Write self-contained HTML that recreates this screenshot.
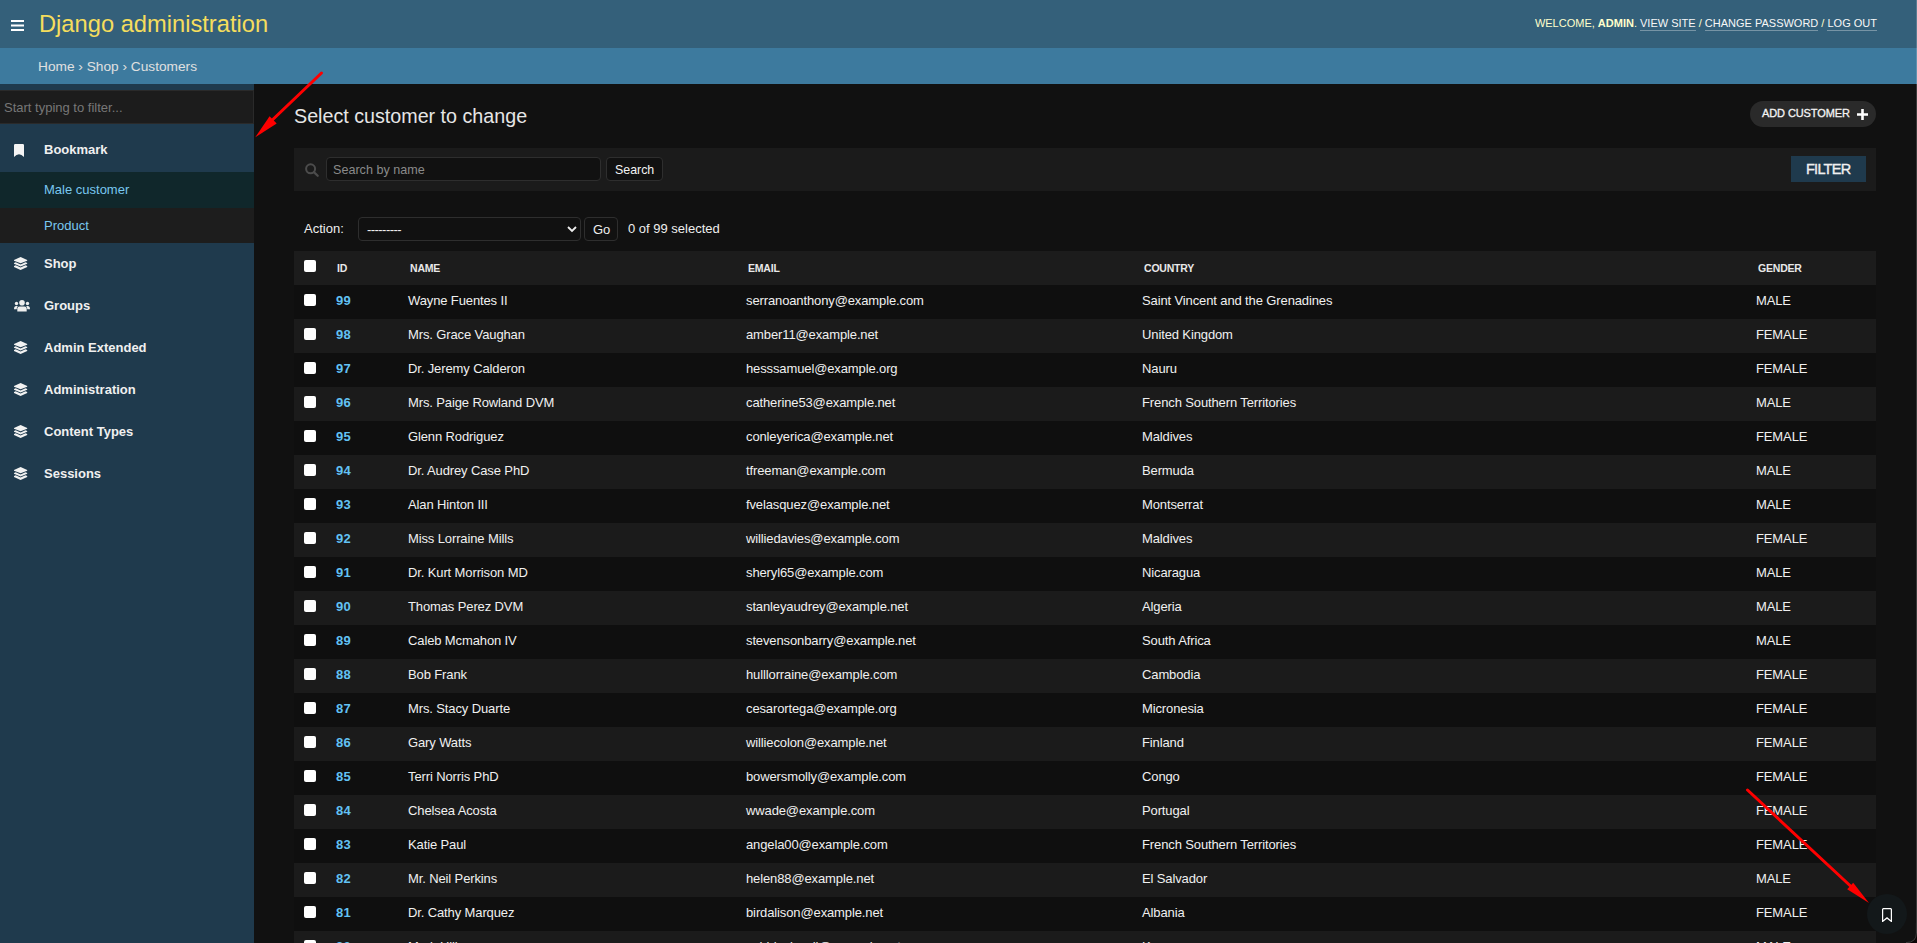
<!DOCTYPE html>
<html><head><meta charset="utf-8">
<style>
*{box-sizing:border-box;margin:0;padding:0}
html,body{width:1917px;height:943px;overflow:hidden;background:#121212;font-family:"Liberation Sans",sans-serif;color:#eee}
.abs{position:absolute}
#header{left:0;top:0;width:1917px;height:48px;background:#34607a}
#brand{left:39px;top:11px;font-size:23.7px;color:#f5dd5d;white-space:nowrap}
#burger{left:11px;top:20px;width:13px;height:11px}
#usertools{right:40px;top:17px;font-size:11px;color:#ffc;white-space:nowrap}
#usertools a{color:#f7f7f7;text-decoration:none;border-bottom:1px solid rgba(247,247,247,0.35);padding-bottom:1px}
#crumbs{left:0;top:48px;width:1917px;height:36px;background:#3d7a9e}
#crumbtxt{left:38px;top:58.5px;font-size:13.7px;color:#e0e0e0;white-space:nowrap}
#sidebar{left:0;top:84px;width:254px;height:859px;background:#1f3a4d}
#filterbox{left:-1px;top:90px;width:255px;height:34px;background:#1c1c1c;border:1px solid #2a2a2a;font-size:13px;color:#777;padding:9px 4px;white-space:nowrap}
.nav{position:absolute;left:0;width:254px;height:42px;font-size:13px;font-weight:bold;color:#f0f0f0}
.nav span{position:absolute;left:44px;top:13px}
.nav .ic{position:absolute;left:14px;top:14px}
.sub{position:absolute;left:0;width:254px;font-size:13px;color:#79c8f0}
.sub span{position:absolute;left:44px;top:10px}
#content{left:254px;top:84px;width:1663px;height:859px;background:#111}
#title{left:294px;top:105px;font-size:19.7px;color:#e6e6e6;white-space:nowrap}
#addbtn{left:1750px;top:101px;width:126px;height:26px;border-radius:13px;background:#2a2a2a;color:#f4f4f4;font-size:11px;font-weight:normal;-webkit-text-stroke:0.3px #f4f4f4;letter-spacing:-0.1px;padding:6px 0 0 12px;white-space:nowrap}
#toolbar{left:294px;top:148px;width:1582px;height:43px;background:#1b1b1b}
#search{left:326px;top:157px;width:275px;height:24px;border:1px solid #2e2e2e;border-radius:4px;background:#111;color:#8a8a8a;font-size:12.6px;padding:5px 0 0 6px}
#searchbtn{left:606px;top:157px;width:57px;height:24px;border:1px solid #2e2e2e;border-radius:4px;background:#111;color:#f4f4f4;font-size:12.4px;padding:5px 0 0 8px}
#filterbtn{left:1791px;top:156px;width:75px;height:26px;background:#1f3a4d;color:#f0f0f0;font-size:14.5px;font-weight:normal;-webkit-text-stroke:0.35px #f0f0f0;letter-spacing:-0.75px;padding:5px 0 0 15px}
#actlbl{left:304px;top:221px;font-size:13px;color:#eee}
#actsel{left:358px;top:217px;width:223px;height:24px;border:1px solid #2e2e2e;border-radius:4px;background:#111;font-size:13px;padding:4px 0 0 8px;color:#eee;letter-spacing:-0.55px}
#gobtn{left:584px;top:217px;width:34px;height:24px;border:1px solid #2e2e2e;border-radius:4px;background:#111;font-size:13px;padding:4px 0 0 8px;color:#eee}
#counter{left:628px;top:221px;font-size:13px;color:#eee;white-space:nowrap}
table{position:absolute;left:294px;top:251px;width:1582px;border-collapse:collapse;table-layout:fixed}
th{height:33.5px;background:#1c1c1c;text-align:left;font-size:10.5px;font-weight:bold;letter-spacing:-0.2px;color:#e8e8e8;padding:1px 0 0 10px;white-space:nowrap}
td{height:34px;font-size:13px;color:#f0f0f0;padding:0 0 2px 8px;letter-spacing:-0.12px;white-space:nowrap;overflow:hidden}
tr.r1 td{background:#0f0f0f}
tr.r2 td{background:#1b1b1b}
td.id{color:#62c2f4;font-weight:bold;padding-left:9px;letter-spacing:0.3px}
.chk{display:block;width:12px;height:12px;background:#fff;border-radius:2px;margin:-2px 0 0 2px}
th .chk{margin:-4px 0 0 0}
#fab{left:1867px;top:894px;width:40px;height:40px;border-radius:20px;background:#13181a}
#edge{left:1916px;top:0;width:1px;height:943px;background:rgba(255,255,255,0.18)}
</style></head><body>
<div id="header" class="abs"></div>
<svg id="burger" class="abs" viewBox="0 0 13 11"><rect x="0" y="0" width="13" height="2" fill="#fff"/><rect x="0" y="4.5" width="13" height="2" fill="#fff"/><rect x="0" y="9" width="13" height="2" fill="#fff"/></svg>
<div id="brand" class="abs">Django administration</div>
<div id="usertools" class="abs">WELCOME, <b>ADMIN</b>. <a>VIEW SITE</a> / <a>CHANGE PASSWORD</a> / <a>LOG OUT</a></div>
<div id="crumbs" class="abs"></div>
<div id="crumbtxt" class="abs">Home › Shop › Customers</div>
<div id="sidebar" class="abs">
</div>
<div id="filterbox" class="abs">Start typing to filter...</div>
<div class="nav" style="top:124px;height:48px"><svg class="ic" width="10" height="13" viewBox="0 0 10 13" style="left:14px;top:20px"><path d="M0 1.2Q0 0 1.2 0H8.8Q10 0 10 1.2V13Q5 7.6 0 13Z" fill="#f4f4f4"/></svg><span style="top:18px">Bookmark</span></div>
<div class="sub" style="top:172px;height:36px;background:#10272b"><span>Male customer</span></div>
<div class="sub" style="top:208px;height:35px;background:#1d1d1d"><span style="top:9.5px">Product</span></div>
<div class="nav" style="top:243px"><svg class="ic" width="14" height="14" viewBox="0 0 14 14"><path d="M6.6 0L13.2 2.9V3.7L6.6 6.2L0 3.7V2.9Z" fill="#f2f2f2"/><path d="M0 5.9L1.7 5.2L6.6 7.4L11.5 5.2L13.2 5.9V6.7L6.6 9.6L0 6.7Z" fill="#f2f2f2"/><path d="M0 9L1.7 8.3L6.6 10.5L11.5 8.3L13.2 9V9.9L6.6 13.1L0 9.9Z" fill="#f2f2f2"/></svg><span>Shop</span></div>
<div class="nav" style="top:285px"><svg class="ic" width="16" height="12" viewBox="0 0 16 12" style="top:14.7px"><circle cx="8" cy="2.8" r="2.8" fill="#eee"/><circle cx="2.5" cy="3.5" r="1.7" fill="#eee"/><circle cx="13.5" cy="3.5" r="1.7" fill="#eee"/><path d="M3.3 11.6V8.6Q3.3 6.4 5.5 6.4H10.5Q12.7 6.4 12.7 8.6V11.6Z" fill="#eee"/><path d="M0 9.3Q0 6.1 2.4 6.1H3.9Q2.7 7.2 2.7 9.3Z" fill="#eee"/><path d="M16 9.3Q16 6.1 13.6 6.1H12.1Q13.3 7.2 13.3 9.3Z" fill="#eee"/></svg><span>Groups</span></div>
<div class="nav" style="top:327px"><svg class="ic" width="14" height="14" viewBox="0 0 14 14"><path d="M6.6 0L13.2 2.9V3.7L6.6 6.2L0 3.7V2.9Z" fill="#f2f2f2"/><path d="M0 5.9L1.7 5.2L6.6 7.4L11.5 5.2L13.2 5.9V6.7L6.6 9.6L0 6.7Z" fill="#f2f2f2"/><path d="M0 9L1.7 8.3L6.6 10.5L11.5 8.3L13.2 9V9.9L6.6 13.1L0 9.9Z" fill="#f2f2f2"/></svg><span>Admin Extended</span></div>
<div class="nav" style="top:369px"><svg class="ic" width="14" height="14" viewBox="0 0 14 14"><path d="M6.6 0L13.2 2.9V3.7L6.6 6.2L0 3.7V2.9Z" fill="#f2f2f2"/><path d="M0 5.9L1.7 5.2L6.6 7.4L11.5 5.2L13.2 5.9V6.7L6.6 9.6L0 6.7Z" fill="#f2f2f2"/><path d="M0 9L1.7 8.3L6.6 10.5L11.5 8.3L13.2 9V9.9L6.6 13.1L0 9.9Z" fill="#f2f2f2"/></svg><span>Administration</span></div>
<div class="nav" style="top:411px"><svg class="ic" width="14" height="14" viewBox="0 0 14 14"><path d="M6.6 0L13.2 2.9V3.7L6.6 6.2L0 3.7V2.9Z" fill="#f2f2f2"/><path d="M0 5.9L1.7 5.2L6.6 7.4L11.5 5.2L13.2 5.9V6.7L6.6 9.6L0 6.7Z" fill="#f2f2f2"/><path d="M0 9L1.7 8.3L6.6 10.5L11.5 8.3L13.2 9V9.9L6.6 13.1L0 9.9Z" fill="#f2f2f2"/></svg><span>Content Types</span></div>
<div class="nav" style="top:453px"><svg class="ic" width="14" height="14" viewBox="0 0 14 14"><path d="M6.6 0L13.2 2.9V3.7L6.6 6.2L0 3.7V2.9Z" fill="#f2f2f2"/><path d="M0 5.9L1.7 5.2L6.6 7.4L11.5 5.2L13.2 5.9V6.7L6.6 9.6L0 6.7Z" fill="#f2f2f2"/><path d="M0 9L1.7 8.3L6.6 10.5L11.5 8.3L13.2 9V9.9L6.6 13.1L0 9.9Z" fill="#f2f2f2"/></svg><span>Sessions</span></div>
<div id="content" class="abs"></div>
<div id="title" class="abs">Select customer to change</div>
<div id="addbtn" class="abs">ADD CUSTOMER<svg class="abs" style="left:107px;top:7.5px" width="11" height="11" viewBox="0 0 11 11"><path d="M4.2 0H6.8V4.2H11V6.8H6.8V11H4.2V6.8H0V4.2H4.2Z" fill="#fff"/></svg></div>
<div id="toolbar" class="abs"></div>
<svg class="abs" style="left:305px;top:163.3px" width="14" height="14" viewBox="0 0 14 14"><circle cx="5.6" cy="5.8" r="4.5" stroke="#4c4c4c" stroke-width="2" fill="none"/><path d="M8.9 9.1L12.7 12.8" stroke="#4c4c4c" stroke-width="2.2" stroke-linecap="round"/></svg>
<div id="search" class="abs">Search by name</div>
<div id="searchbtn" class="abs">Search</div>
<div id="filterbtn" class="abs">FILTER</div>
<div id="actlbl" class="abs">Action:</div>
<div id="actsel" class="abs">---------<svg class="abs" style="left:208px;top:8px" width="10" height="7" viewBox="0 0 10 7"><path d="M1 1L5 5L9 1" stroke="#eee" stroke-width="1.8" fill="none"/></svg></div>
<div id="gobtn" class="abs">Go</div>
<div id="counter" class="abs">0 of 99 selected</div>
<table>
<colgroup><col style="width:33px"><col style="width:73px"><col style="width:338px"><col style="width:396px"><col style="width:614px"><col style="width:128px"></colgroup>
<tr><th style="padding-left:10px"><i class="chk"></i></th><th>ID</th><th>NAME</th><th>EMAIL</th><th>COUNTRY</th><th>GENDER</th></tr>
<tr class="r1"><td class="cb"><i class="chk"></i></td><td class="id">99</td><td>Wayne Fuentes II</td><td>serranoanthony@example.com</td><td>Saint Vincent and the Grenadines</td><td>MALE</td></tr>
<tr class="r2"><td class="cb"><i class="chk"></i></td><td class="id">98</td><td>Mrs. Grace Vaughan</td><td>amber11@example.net</td><td>United Kingdom</td><td>FEMALE</td></tr>
<tr class="r1"><td class="cb"><i class="chk"></i></td><td class="id">97</td><td>Dr. Jeremy Calderon</td><td>hesssamuel@example.org</td><td>Nauru</td><td>FEMALE</td></tr>
<tr class="r2"><td class="cb"><i class="chk"></i></td><td class="id">96</td><td>Mrs. Paige Rowland DVM</td><td>catherine53@example.net</td><td>French Southern Territories</td><td>MALE</td></tr>
<tr class="r1"><td class="cb"><i class="chk"></i></td><td class="id">95</td><td>Glenn Rodriguez</td><td>conleyerica@example.net</td><td>Maldives</td><td>FEMALE</td></tr>
<tr class="r2"><td class="cb"><i class="chk"></i></td><td class="id">94</td><td>Dr. Audrey Case PhD</td><td>tfreeman@example.com</td><td>Bermuda</td><td>MALE</td></tr>
<tr class="r1"><td class="cb"><i class="chk"></i></td><td class="id">93</td><td>Alan Hinton III</td><td>fvelasquez@example.net</td><td>Montserrat</td><td>MALE</td></tr>
<tr class="r2"><td class="cb"><i class="chk"></i></td><td class="id">92</td><td>Miss Lorraine Mills</td><td>williedavies@example.com</td><td>Maldives</td><td>FEMALE</td></tr>
<tr class="r1"><td class="cb"><i class="chk"></i></td><td class="id">91</td><td>Dr. Kurt Morrison MD</td><td>sheryl65@example.com</td><td>Nicaragua</td><td>MALE</td></tr>
<tr class="r2"><td class="cb"><i class="chk"></i></td><td class="id">90</td><td>Thomas Perez DVM</td><td>stanleyaudrey@example.net</td><td>Algeria</td><td>MALE</td></tr>
<tr class="r1"><td class="cb"><i class="chk"></i></td><td class="id">89</td><td>Caleb Mcmahon IV</td><td>stevensonbarry@example.net</td><td>South Africa</td><td>MALE</td></tr>
<tr class="r2"><td class="cb"><i class="chk"></i></td><td class="id">88</td><td>Bob Frank</td><td>hulllorraine@example.com</td><td>Cambodia</td><td>FEMALE</td></tr>
<tr class="r1"><td class="cb"><i class="chk"></i></td><td class="id">87</td><td>Mrs. Stacy Duarte</td><td>cesarortega@example.org</td><td>Micronesia</td><td>FEMALE</td></tr>
<tr class="r2"><td class="cb"><i class="chk"></i></td><td class="id">86</td><td>Gary Watts</td><td>williecolon@example.net</td><td>Finland</td><td>FEMALE</td></tr>
<tr class="r1"><td class="cb"><i class="chk"></i></td><td class="id">85</td><td>Terri Norris PhD</td><td>bowersmolly@example.com</td><td>Congo</td><td>FEMALE</td></tr>
<tr class="r2"><td class="cb"><i class="chk"></i></td><td class="id">84</td><td>Chelsea Acosta</td><td>wwade@example.com</td><td>Portugal</td><td>FEMALE</td></tr>
<tr class="r1"><td class="cb"><i class="chk"></i></td><td class="id">83</td><td>Katie Paul</td><td>angela00@example.com</td><td>French Southern Territories</td><td>FEMALE</td></tr>
<tr class="r2"><td class="cb"><i class="chk"></i></td><td class="id">82</td><td>Mr. Neil Perkins</td><td>helen88@example.net</td><td>El Salvador</td><td>MALE</td></tr>
<tr class="r1"><td class="cb"><i class="chk"></i></td><td class="id">81</td><td>Dr. Cathy Marquez</td><td>birdalison@example.net</td><td>Albania</td><td>FEMALE</td></tr>
<tr class="r2"><td class="cb"><i class="chk"></i></td><td class="id">80</td><td>Mark Hill</td><td>ashblackwell@example.net</td><td>Kenya</td><td>MALE</td></tr>
</table>
<svg class="abs" style="left:0;top:0" width="1917" height="943">
<line x1="321.5" y1="73" x2="266" y2="126" stroke="#f00" stroke-width="3" stroke-linecap="round"/>
<path d="M255.3 137.3L269.6 116.3L276.7 123.5Z" fill="#f00"/>
<line x1="1747.5" y1="790" x2="1858" y2="893" stroke="#f00" stroke-width="3" stroke-linecap="round"/>
<path d="M1869 903L1853.2 882.8L1847.2 889.2Z" fill="#f00"/>
</svg>
<div id="fab" class="abs"><svg class="abs" style="left:15px;top:14px" width="10" height="14" viewBox="0 0 10 14"><path d="M1.6 0.6H8.4Q9.4 0.6 9.4 1.6V13.4L5 9.9L0.6 13.4V1.6Q0.6 0.6 1.6 0.6Z" stroke="#fff" stroke-width="1.25" fill="none"/></svg></div>
<div id="edge" class="abs"></div>
<svg class="abs" style="left:1897px;top:923px" width="20" height="20" viewBox="0 0 20 20"><path d="M20 10V20H9Q19 20 19 10Z" fill="#0c0606"/><path d="M19.4 0V10Q19.4 19.6 9 19.6" stroke="#3c3c3c" stroke-width="1" fill="none"/></svg>
</body></html>
